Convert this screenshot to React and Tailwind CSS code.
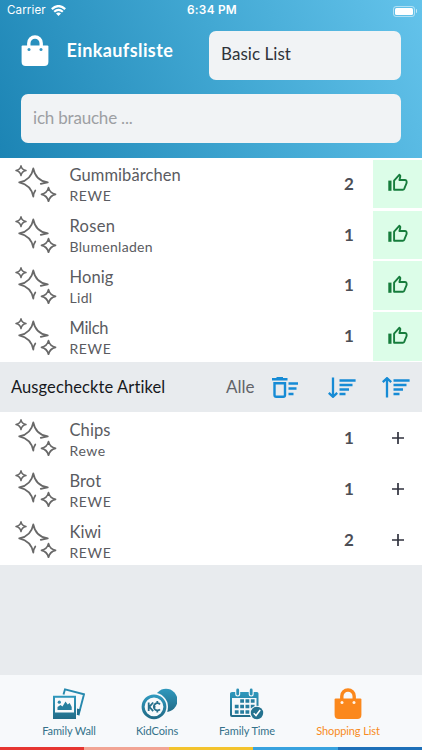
import React from "react";

const needed = [
  { name: "Gummibärchen", shop: "REWE", count: 2, nameCls: "tracking-[0.08px]", shopCls: "tracking-[0.6px]" },
  { name: "Rosen", shop: "Blumenladen", count: 1, nameCls: "tracking-[0.3px]", shopCls: "tracking-[0.3px]" },
  { name: "Honig", shop: "Lidl", count: 1, nameCls: "tracking-[0.1px]", shopCls: "tracking-[0.3px]" },
  { name: "Milch", shop: "REWE", count: 1, nameCls: "tracking-[-0.3px]", shopCls: "tracking-[0.6px]" },
];

const checked = [
  { name: "Chips", shop: "Rewe", count: 1, nameCls: "tracking-[0.1px]", shopCls: "tracking-[0.6px]" },
  { name: "Brot", shop: "REWE", count: 1, nameCls: "tracking-[0.1px]", shopCls: "tracking-[0.6px]" },
  { name: "Kiwi", shop: "REWE", count: 2, nameCls: "tracking-[0px]", shopCls: "tracking-[0.6px]" },
];

function Bag({ fill, dot, className }) {
  return (
    <svg className={className} viewBox="0 0 28 32" fill="none">
      <path d="M7.8 12V8.2a6.2 6.2 0 0 1 12.4 0V12" stroke={fill} strokeWidth="3.4" />
      <path d="M1.6 10.5h24.8q1 0 1 1V27q0 4-4 4H4.6q-4 0-4-4V11.5q0-1 1-1z" fill={fill} />
      <circle cx="8" cy="14.4" r="1.5" fill={dot} />
      <circle cx="20" cy="14.4" r="1.5" fill={dot} />
    </svg>
  );
}

function Sparkles() {
  return (
    <svg className="mt-px ml-[15px] h-[38px] w-[42px] shrink-0" viewBox="0 0 42 38" fill="none" stroke="#686868" strokeWidth="1.75" strokeLinejoin="round" strokeLinecap="round">
      <path d="M6 .8Q6.8 4.7 11 5.5Q6.8 6.3 6 10.5Q5.2 6.3 1 5.5Q5.2 4.7 6 .8z" strokeWidth="1.5" />
      <path d="M25.8 18.8Q29 18 32.8 17.4Q20.5 15.5 18.3 3.3Q16.2 15.2 4.2 17.4Q16.2 20 18.3 31.6Q18.5 28 20.3 25.5" />
      <path d="M33.5 22.6Q34.8 28 40.5 29.3Q34.8 30.6 33.5 36.2Q32.2 30.6 26.5 29.3Q32.2 28 33.5 22.6z" />
    </svg>
  );
}

function Thumb() {
  return (
    <svg className="h-5 w-5" viewBox="0 0 20 20" fill="none">
      <path d="M.3 7.6h3.2v10.2H.3z" fill="#167c3c" />
      <path d="M6.1 16.8V7.6L11.5 1.7Q12.7 2.5 12.3 3.8L11.4 7H17.2Q18.6 7 18.6 8.6V10L16.2 15.9Q15.8 16.8 14.8 16.8z" stroke="#167c3c" strokeWidth="1.9" strokeLinejoin="round" />
    </svg>
  );
}

function Row({ item, done }) {
  return (
    <div className="flex h-[50.9px] items-center bg-white">
      <Sparkles />
      <div className="ml-[12.5px] flex-1 pt-[5px] text-[#5a5b61]">
        <div className={`text-[16.5px] leading-[21px] ${item.nameCls}`}>{item.name}</div>
        <div className={`text-[14px] leading-[20px] ${item.shopCls}`}>{item.shop}</div>
      </div>
      <div className="w-6 text-center text-[17px] font-bold text-[#4c4e56]">{item.count}</div>
      {done ? (
        <div className="ml-3 flex h-[48px] w-[49px] items-center justify-center pt-px">
          <svg className="h-3 w-3" viewBox="0 0 12 12" stroke="#30323e" strokeWidth="1.7"><path d="M6 0v12M0 6h12" /></svg>
        </div>
      ) : (
        <div className="mt-px ml-3 flex h-[48.5px] w-[49px] items-center justify-center bg-[#dcfde8] pb-px"><Thumb /></div>
      )}
    </div>
  );
}

function Sort({ up }) {
  return (
    <svg className="h-[21px] w-7" viewBox="0 0 28 21" fill="none" stroke="#168bd5" strokeWidth="2.3">
      <path d={up ? "M5 20.5V1.5M.8 5.2 5 1.2 9.2 5.2" : "M5 .5v19M.8 15.8 5 19.8 9.2 15.8"} />
      <path d="M11.5 3.5H27.6M11.5 8H24.5M11.5 12.5H21M11.5 17H17.5" />
    </svg>
  );
}

function Photos() {
  return (
    <svg className="h-8 w-8" viewBox="0 0 32 32">
      <defs><linearGradient id="blue" x1="0" y1="0" x2="0" y2="1"><stop stopColor="#2f98bd" /><stop offset="1" stopColor="#226c88" /></linearGradient></defs>
      <path d="M10.5 6.5 12 1.3 31 6.3 25.7 26.4 24 25.7" fill="none" stroke="#2789ae" strokeWidth="1.9" />
      <path d="M24 20.5 27.5 21.5 26 27H24z" fill="#226f8e" />
      <path fillRule="evenodd" d="M0 7.7H23V31H0zM2 9.7V24.5H21V9.7z" fill="url(#blue)" />
      <circle cx="6.3" cy="14.2" r="1.6" fill="#2b87aa" />
      <path d="M4.5 22v-3l3-2 2 1.5 3-5 2.2 3 2-1.5 2 4V22z" fill="#277f9e" />
    </svg>
  );
}

function Coins() {
  return (
    <svg className="ml-1 h-8 w-9" viewBox="0 0 36 32">
      <circle cx="25" cy="12.3" r="11.5" fill="url(#blue)" />
      <circle cx="13" cy="18.8" r="14" fill="#f7f9fb" />
      <circle cx="13" cy="18.8" r="10.9" fill="none" stroke="url(#blue)" strokeWidth="3" />
      <path d="M7.7 14.5v8.6M12.2 14.5l-3.9 4.3 3.9 4.3M19 16.3a3.6 3.6 0 1 0 0 5M16.3 13v3M16.3 21.5v3M12 18.8h2.5" fill="none" stroke="#276f8b" strokeWidth="1.8" />
    </svg>
  );
}

function Calendar() {
  return (
    <svg className="h-8 w-[34px]" viewBox="0 0 34 32">
      <path fillRule="evenodd" d="M2 4H27Q28.5 4 28.5 5.5V29H2Q0 29 0 27V5.5Q0 4 2 4zM2 10V27H26.5V10z" fill="url(#blue)" />
      <path d="M7.7 2v4M21.2 2v4" stroke="#f7f9fb" strokeWidth="5" strokeLinecap="round" />
      <path d="M7.7 2v4M21.2 2v4" stroke="#2d91b5" strokeWidth="2.8" strokeLinecap="round" />
      <path d="M10.2 13h3.8M15.5 13h3.8M20.8 13h3.8M4.8 18.5h3.8M10.2 18.5h3.8M15.5 18.5h3.8M20.8 18.5h3.8M4.8 24h3.8M10.2 24h3.8M15.5 24h3.8" stroke="#277d9e" strokeWidth="3.6" />
      <circle cx="27" cy="25" r="7.3" fill="#f7f9fb" />
      <circle cx="27" cy="25" r="6.2" fill="#24728f" />
      <path d="M23.7 25.2 26 27.5 30.2 22" stroke="white" strokeWidth="1.5" fill="none" />
    </svg>
  );
}

function Tab({ icon, label, className }) {
  return (
    <div className={`flex flex-col items-center ${className}`}>
      {icon}
      <span className="mt-[4px] text-[11px] leading-[14px] tracking-[-0.1px] whitespace-nowrap">{label}</span>
    </div>
  );
}

export default function App() {
  return (
    <div className="flex h-[750px] w-[422px] flex-col overflow-hidden bg-[#e8ebee] font-['Lato',sans-serif] [font-variant-ligatures:none]">
      <header className="h-[158px] shrink-0 bg-[linear-gradient(65deg,#1c84b4_0%,#42a8d3_55%,#64c3eb_100%)]">
        <div className="flex h-[22px] items-center px-[7px] font-['Inter',sans-serif] text-[12px] text-white">
          <div className="flex flex-1 items-center gap-[5px]">
            <span className="text-[11.6px] tracking-[0.1px]">Carrier</span>
            <svg className="h-[11px] w-[15px]" viewBox="0 0 15 11" fill="none" stroke="white" strokeWidth="2.2">
              <path d="M.8 4.1Q7.5-2 14.2 4.1M3.2 6.7Q7.5 2.9 11.8 6.7" />
              <path d="M5 8.5Q7.5 6.4 10 8.5L7.5 11z" fill="white" stroke="none" />
            </svg>
          </div>
          <span className="text-[11.8px] font-semibold tracking-[0.25px]">6:34 PM</span>
          <div className="-mr-[2px] flex flex-1 items-center justify-end gap-px">
            <div className="h-[11px] w-[22px] rounded-[3px] border border-white/50 p-px"><div className="h-full rounded-[1.5px] bg-white" /></div>
            <div className="h-[4px] w-[1.5px] rounded-r bg-white/60" />
          </div>
        </div>
        <div className="mt-[9px] flex h-[49px] pr-[21px] pl-[21px]">
          <Bag className="mt-[4px] h-8 w-7" fill="white" dot="#3596c3" />
          <h1 className="mt-[6px] ml-[17.5px] flex-1 text-[18px] leading-[26px] font-bold tracking-[0.4px] text-white">Einkaufsliste</h1>
          <div className="h-[49px] w-[192px] rounded-[7px] bg-[#f1f3f5] pl-3 text-[17px] leading-[46px] tracking-[0.05px] text-[#30333a]">Basic List</div>
        </div>
        <div className="mx-[21px] mt-[14px] h-[49px] rounded-[7px] bg-[#f1f3f5] pl-3 text-[17px] leading-[47px] tracking-[-0.2px] text-[#9d9fa3]">ich brauche ...</div>
      </header>
      <section className="shrink-0">
        {needed.map((item) => <Row key={item.name} item={item} />)}
        <div className="flex h-[50.9px] items-center pl-[11px] text-[17px]">
          <span className="w-[215px] text-[16.5px] tracking-[0.1px] text-[#17191d]">Ausgecheckte Artikel</span>
          <span className="w-[46px] text-[17px] text-[#626469]">Alle</span>
          <svg className="h-[21px] w-[26px]" viewBox="0 0 26 21" fill="none" stroke="#168bd5" strokeWidth="2.3">
            <path d="M0 2.3h15.5M4.5 1h6.5M2.5 6.2V18Q2.5 19.8 4.3 19.8H11.2Q13 19.8 13 18V6.2z" strokeWidth="2.4" />
            <path d="M16.5 6.5H26M16.5 11.5H24.5M16.5 17H21.5" />
          </svg>
          <div className="ml-[30px]"><Sort /></div>
          <div className="ml-[25.5px]"><Sort up /></div>
        </div>
        {checked.map((item) => <Row key={item.name} item={item} done />)}
      </section>
      <div className="flex-1" />
      <nav className="flex h-[72px] shrink-0 bg-[#f7f9fb] pt-[13px] text-[#34718a]">
        <Tab className="ml-[38px] w-[62px]" icon={<Photos />} label="Family Wall" />
        <Tab className="ml-[27px] w-[60px]" icon={<Coins />} label="KidCoins" />
        <Tab className="ml-[29px] w-[62px]" icon={<Calendar />} label="Family Time" />
        <Tab className="ml-[38px] w-[64px] text-[#f88b22]" icon={<Bag className="h-8 w-7" fill="#fb881c" dot="#fff4e8" />} label="Shopping List" />
      </nav>
      <footer className="flex h-[3px] shrink-0">
        <div className="flex-1 bg-[#e63631]" /><div className="flex-1 bg-[#f2a595]" /><div className="flex-1 bg-[#f3c32c]" /><div className="flex-1 bg-[#37a2df]" /><div className="flex-1 bg-[#1d6fb8]" />
      </footer>
    </div>
  );
}
